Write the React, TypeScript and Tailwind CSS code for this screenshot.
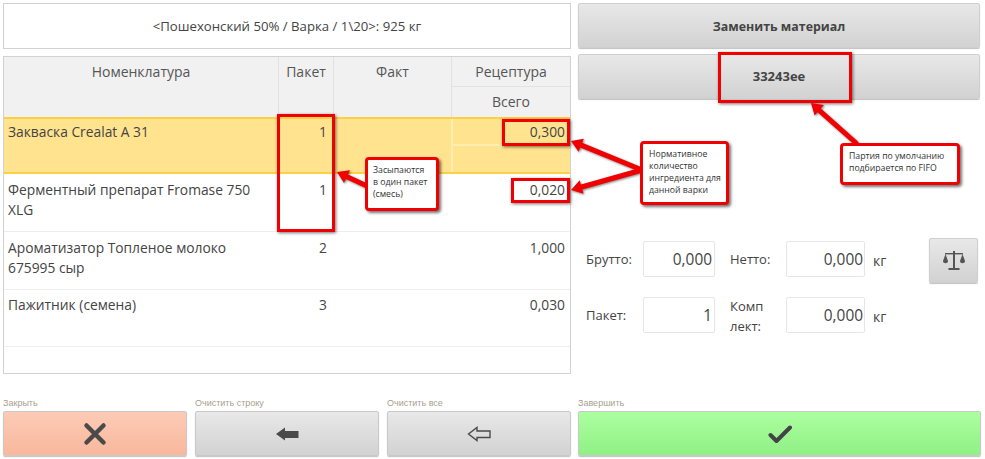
import React from "react";

const font = "[font-family:'Open_Sans','Noto_Sans',sans-serif]";

function Row({ name, pack, total, className = "", pad = "pt-[6px]", selected = false }: { name: string; pack: string; total: string; className?: string; pad?: string; selected?: boolean }) {
  return (
    <div className={`grid grid-cols-[274px_55px_118px_1fr] text-[13.8px] leading-[20px] ${className}`}>
      <div className={`px-[4px] ${pad}`}>{name}</div>
      <div className={`px-[6px] text-right ${pad}`}>{pack}</div>
      <div />
      {selected ? (
        <div className="flex flex-col border-l-2 border-[#ffeeb0]">
          <div className={`h-[27px] border-b-2 border-[#ffeeb0] px-[5px] text-right ${pad}`}>{total}</div>
        </div>
      ) : (
        <div className={`px-[5px] text-right ${pad}`}>{total}</div>
      )}
    </div>
  );
}

function GreyButton({ children, className = "" }: { children: React.ReactNode; className?: string }) {
  return (
    <div className={`flex items-center justify-center rounded-[2px] border border-[#cfcfcf] bg-gradient-to-b from-[#e8e8e8] to-[#d2d2d2] shadow-[0_1px_1px_rgba(0,0,0,0.25)] ${className}`}>
      {children}
    </div>
  );
}

function Input({ value, className = "" }: { value: string; className?: string }) {
  return (
    <div className={`flex h-[36px] items-center justify-end rounded-[2px] border border-[#e6e6e6] bg-white pt-[2px] text-[15.4px] text-[#444] ${className}`}>
      {value}
    </div>
  );
}

function Action({ label, className = "", children }: { label: string; className?: string; children: React.ReactNode }) {
  return (
    <div className="flex flex-col">
      <div className="h-[15px] font-['Liberation_Sans'] text-[9px] leading-[15px] text-[#a89f8c]">{label}</div>
      <div className={`flex h-[45px] items-center justify-center rounded-[2px] border border-[#c9c9c9] shadow-[0_1px_1px_rgba(0,0,0,0.25)] ${className}`}>
        {children}
      </div>
    </div>
  );
}

function Callout({ className, children }: { className: string; children: React.ReactNode }) {
  return (
    <div className={`absolute whitespace-nowrap rounded-[4px] border-[3px] border-[#f00000] bg-white text-[8.7px] leading-[12px] text-[#333] shadow-[2px_2px_3px_rgba(0,0,0,0.55)] ${className}`}>
      {children}
    </div>
  );
}

function RedBox({ className }: { className: string }) {
  return <div className={`absolute border-[3px] border-[#f00000] shadow-[1px_1px_3px_rgba(0,0,0,0.55)] ${className}`} />;
}

function Arrow({ x1, y1, x2, y2 }: { x1: number; y1: number; x2: number; y2: number }) {
  const a = Math.atan2(y2 - y1, x2 - x1);
  const hl = 11;
  const hw = 7;
  const bx = x2 - hl * Math.cos(a);
  const by = y2 - hl * Math.sin(a);
  const px = Math.cos(a + Math.PI / 2);
  const py = Math.sin(a + Math.PI / 2);
  const pts = `${x2},${y2} ${bx + hw * px},${by + hw * py} ${bx - hw * px},${by - hw * py}`;
  return (
    <g>
      <line x1={x1} y1={y1} x2={bx} y2={by} stroke="#f00000" strokeWidth="5" strokeLinecap="round" />
      <polygon points={pts} fill="#f00000" />
    </g>
  );
}

export default function App() {
  return (
    <div className={`relative h-[459px] w-[985px] overflow-hidden bg-white text-[#444] ${font}`}>
      <div className="flex gap-[7px] px-[3px] pt-[3px]">
        <div className="flex w-[568px] flex-col gap-[7px]">
          <div className="flex h-[46px] items-center justify-center border border-[#d2d2d2] pt-[2px] text-[13.2px] text-[#444]">
            &lt;Пошехонский 50% / Варка / 1\20&gt;: 925 кг
          </div>
          <div className="flex h-[318px] flex-col border border-[#d2d2d2]">
            <div className="grid h-[60px] grid-cols-[274px_55px_118px_1fr] bg-[#f1f1f1] text-center text-[14px] text-[#555]">
              <div className="pt-[5px] leading-[20px]">Номенклатура</div>
              <div className="border-l border-[#e2e2e2] pt-[5px] leading-[20px]">Пакет</div>
              <div className="border-l border-[#e2e2e2] pt-[5px] leading-[20px]">Факт</div>
              <div className="flex flex-col border-l border-[#e2e2e2]">
                <div className="h-[30px] border-b border-[#e2e2e2] pt-[5px] leading-[20px]">Рецептура</div>
                <div className="pt-[5px] leading-[20px]">Всего</div>
              </div>
            </div>
            <Row selected pad="pt-[3px]" name="Закваска Crealat A 31" pack="1" total="0,300" className="h-[57px] border-y-2 border-[#fbd045] bg-[#ffe38f]" />
            <Row name="Ферментный препарат Fromase 750 XLG" pack="1" total="0,020" className="h-[58px] border-b border-[#eeeeee]" />
            <Row name="Ароматизатор Топленое молоко 675995 сыр" pack="2" total="1,000" className="h-[58px] border-b border-[#eeeeee]" />
            <Row pad="pt-[5px]" name="Пажитник (семена)" pack="3" total="0,030" className="h-[57px] border-b border-[#eeeeee]" />
          </div>
        </div>

        <div className="flex w-[402px] flex-col">
          <GreyButton className="h-[45px] pt-[3px] text-[12.4px] font-bold text-[#444]">Заменить материал</GreyButton>
          <GreyButton className="mt-[6px] h-[45px] pt-[1px] text-[13px] font-bold text-[#444]">33243ee</GreyButton>

          <div className="mt-[142px] flex">
            <div className="grid grid-cols-[65px_72px_15px_56px_79px] items-center gap-y-[20px] text-[13px] text-[#444]">
              <div className="pl-[8px] leading-[19px]">Брутто:</div>
              <Input value="0,000" className="pr-[2px]" />
              <div />
              <div className="leading-[19px]">Нетто:</div>
              <Input value="0,000" className="pr-[1px]" />
              <div className="pl-[8px] leading-[19px]">Пакет:</div>
              <Input value="1" className="pr-[2px]" />
              <div />
              <div className="flex h-[36px] items-center pt-[1px] leading-[20px]"><div>Комп<br />лект:</div></div>
              <Input value="0,000" className="pr-[1px]" />
            </div>
            <div className="ml-[8px] flex w-[14px] shrink-0 flex-col gap-[37px] pt-[10px] text-[14px] leading-[19px]">
              <div>кг</div>
              <div>кг</div>
            </div>
            <GreyButton className="-mt-[3px] ml-[42px] h-[45px] w-[49px] shrink-0">
              <svg width="24" height="22" viewBox="0 0 24 22" fill="#555">
                <rect x="11" y="1" width="2" height="17" />
                <rect x="6.5" y="18" width="11" height="2" />
                <rect x="3" y="3" width="18" height="1.4" />
                <path d="M3.5 4 L1 11 C1 14 6 14 6 11 Z" />
                <path d="M20.5 4 L18 11 C18 14 23 14 23 11 Z" />
              </svg>
            </GreyButton>
          </div>
        </div>
      </div>

      <div className="mt-[22px] grid grid-cols-[184px_184px_184px_402px] gap-x-[8px] px-[3px] [&>*:last-child]:-ml-[1px]">
        <Action label="Закрыть" className="bg-gradient-to-b from-[#fdcbb6] to-[#f8b79c]">
          <svg width="24" height="24" viewBox="0 0 24 24"><path d="M3.5 3.5 L20.5 20.5 M20.5 3.5 L3.5 20.5" stroke="#4a4a4a" strokeWidth="4.5" strokeLinecap="round" /></svg>
        </Action>
        <Action label="Очистить строку" className="bg-gradient-to-b from-[#e8e8e8] to-[#d2d2d2]">
          <svg width="24" height="16" viewBox="0 0 24 16"><path d="M1 8 L10 1.5 V5 H23.5 V12 H10 V14.5 Z" fill="#4a4a4a" /></svg>
        </Action>
        <Action label="Очистить все" className="bg-gradient-to-b from-[#e8e8e8] to-[#d2d2d2]">
          <svg width="24" height="16" viewBox="0 0 24 16"><path d="M1.5 8 L10 1.5 V5 H23 V11.5 H10 V14.5 Z" fill="none" stroke="#4a4a4a" strokeWidth="1.4" /></svg>
        </Action>
        <div className="w-[403px]">
          <Action label="Завершить" className="bg-gradient-to-b from-[#acff9f] to-[#8ff085]">
            <svg width="24" height="20" viewBox="0 0 24 20"><path d="M2.5 11 L8.5 17 L22 3.5" fill="none" stroke="#444" strokeWidth="4" strokeLinecap="round" strokeLinejoin="round" /></svg>
          </Action>
        </div>
      </div>

      <RedBox className="left-[277px] top-[114px] h-[118px] w-[58px]" />
      <RedBox className="left-[502px] top-[119px] h-[27px] w-[68px]" />
      <RedBox className="left-[511px] top-[178px] h-[25px] w-[59px]" />
      <RedBox className="left-[718px] top-[52px] h-[51px] w-[134px]" />

      <svg className="pointer-events-none absolute left-0 top-0 drop-shadow-[1px_1px_1px_rgba(0,0,0,0.5)]" width="985" height="459">
        <Arrow x1={367} y1={186} x2={337} y2={172} />
        <Arrow x1={642} y1={170} x2={571} y2={141} />
        <Arrow x1={642} y1={170} x2={571} y2={190} />
        <Arrow x1={856} y1={143} x2={811} y2={103} />
      </svg>

      <Callout className="left-[365px] top-[157px] h-[54px] w-[74px] pl-[5px] pt-[4px]">
        Засыпаются<br />в один пакет<br />(смесь)
      </Callout>
      <Callout className="left-[640px] top-[141px] h-[64px] w-[89px] pl-[6px] pt-[4px]">
        Нормативное<br />количество<br />ингредиента для<br />данной варки
      </Callout>
      <Callout className="left-[840px] top-[143px] h-[42px] w-[120px] pl-[6px] pt-[4px]">
        Партия по умолчанию<br />подбирается по FIFO
      </Callout>
    </div>
  );
}
